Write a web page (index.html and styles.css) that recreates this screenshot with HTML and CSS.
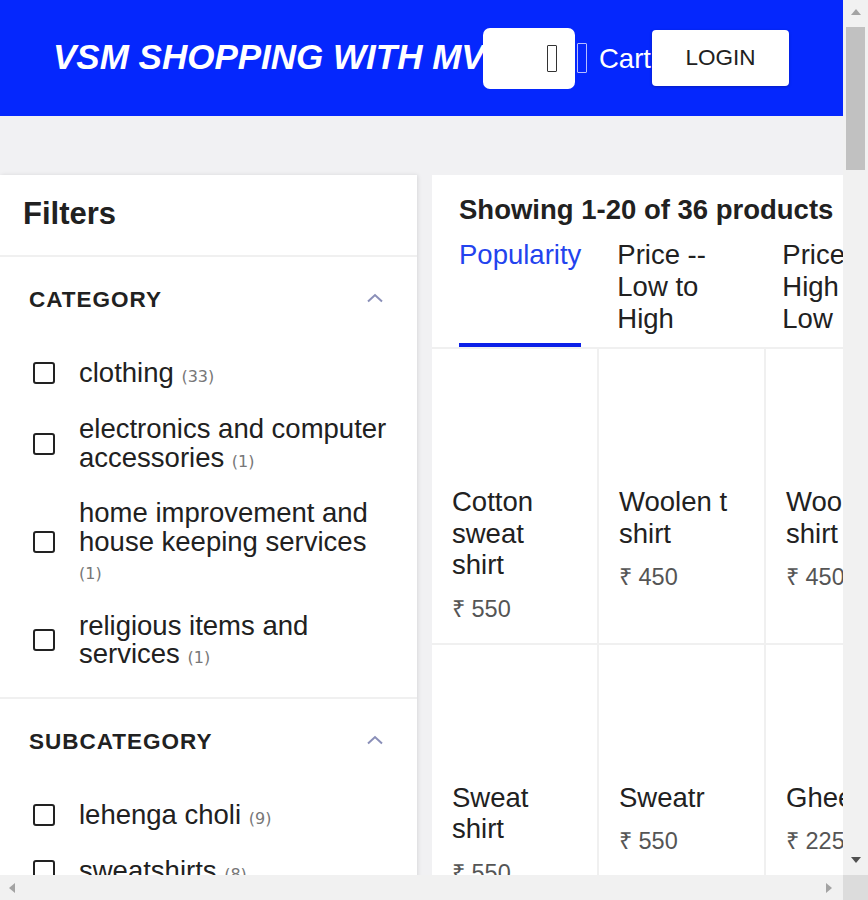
FILE: index.html
```html
<!DOCTYPE html>
<html lang="en">
<head>
<meta charset="utf-8">
<title>VSM Shopping</title>
<link rel="stylesheet" href="styles.css">
</head>
<body>
<div class="screen">
  <div class="viewport">
    <header class="topbar">
      <div class="brand">VSM SHOPPING WITH MVSM</div>
      <div class="search"><span class="glyph dark"></span></div>
      <div class="cart"><span class="glyph light"></span><span class="cart-text">Cart</span></div>
      <button class="login">LOGIN</button>
    </header>
    <main class="page">
      <aside class="filters">
        <div class="filters-title">Filters</div>
        <section class="fsection">
          <div class="fhead"><span class="fname">CATEGORY</span>
            <svg class="chev" width="18" height="10" viewBox="0 0 18 10"><polyline points="2,8.5 9,2 16,8.5" fill="none" stroke="#8a8fb8" stroke-width="2"/></svg>
          </div>
          <ul class="flist">
            <li class="fitem"><span class="box"></span><span class="flabel">clothing <span class="count">(33)</span></span></li>
            <li class="fitem"><span class="box"></span><span class="flabel">electronics and computer accessories <span class="count">(1)</span></span></li>
            <li class="fitem"><span class="box"></span><span class="flabel">home improvement and house keeping services <span class="count">(1)</span></span></li>
            <li class="fitem"><span class="box"></span><span class="flabel">religious items and services <span class="count">(1)</span></span></li>
          </ul>
        </section>
        <section class="fsection">
          <div class="fhead"><span class="fname">SUBCATEGORY</span>
            <svg class="chev" width="18" height="10" viewBox="0 0 18 10"><polyline points="2,8.5 9,2 16,8.5" fill="none" stroke="#8a8fb8" stroke-width="2"/></svg>
          </div>
          <ul class="flist">
            <li class="fitem"><span class="box"></span><span class="flabel">lehenga choli <span class="count">(9)</span></span></li>
            <li class="fitem"><span class="box"></span><span class="flabel">sweatshirts <span class="count">(8)</span></span></li>
            <li class="fitem"><span class="box"></span><span class="flabel">woolen t shirts <span class="count">(4)</span></span></li>
          </ul>
        </section>
      </aside>
      <section class="results">
        <div class="results-head">
          <div class="showing">Showing 1-20 of 36 products</div>
          <div class="tabs">
            <div class="tab active">Popularity</div>
            <div class="tab">Price -- Low to High</div>
            <div class="tab">Price -- High to Low</div>
          </div>
        </div>
        <div class="grid">
          <div class="card"><div class="thumbimg"></div><div class="pname">Cotton sweat shirt</div><div class="price">₹ 550</div></div>
          <div class="card"><div class="thumbimg"></div><div class="pname">Woolen t shirt</div><div class="price">₹ 450</div></div>
          <div class="card"><div class="thumbimg"></div><div class="pname">Woolen t shirt</div><div class="price">₹ 450</div></div>
          <div class="card"><div class="thumbimg"></div><div class="pname">Sweat shirt</div><div class="price">₹ 550</div></div>
          <div class="card"><div class="thumbimg"></div><div class="pname">Sweatr</div><div class="price">₹ 550</div></div>
          <div class="card"><div class="thumbimg"></div><div class="pname">Ghee diya</div><div class="price">₹ 225</div></div>
        </div>
      </section>
    </main>
  </div>
  <div class="vscroll">
    <span class="arr up"></span>
    <div class="vthumb"></div>
    <span class="arr down"></span>
  </div>
  <div class="hscroll">
    <span class="arr left"></span>
    <span class="arr right"></span>
  </div>
  <div class="corner"></div>
</div>
</body>
</html>
```
FILE: styles.css
```css
* { box-sizing: border-box; }
html, body { margin: 0; padding: 0; }
body {
  font-family: "Liberation Sans", Arial, sans-serif;
  color: #212121;
  background: #f1f1f3;
}
.screen {
  width: 868px;
  height: 900px;
  display: grid;
  grid-template-columns: 843px 25px;
  grid-template-rows: 875px 25px;
  overflow: hidden;
}
.viewport {
  overflow: hidden;
  background: #f1f1f3;
}

/* header */
.topbar {
  height: 116px;
  background: #0527fd;
  display: flex;
  align-items: center;
  padding-left: 53px;
  white-space: nowrap;
}
.brand {
  width: 430px;
  flex-shrink: 0;
  color: #fff;
  font-size: 35px;
  font-weight: bold;
  font-style: italic;
  overflow: visible;
  margin-top: -2px;
}
.search {
  position: relative;
  z-index: 1;
  width: 92px;
  height: 61px;
  background: #fff;
  border-radius: 7px;
  display: flex;
  align-items: center;
  justify-content: flex-end;
  padding-right: 18px;
  flex-shrink: 0;
}
.glyph {
  display: block;
  width: 10px;
  height: 27px;
  border-radius: 1px;
}
.glyph.dark { border: 1.5px solid #333; }
.glyph.light { border: 1.5px solid #b6bdff; height: 30px; }
.cart {
  display: flex;
  align-items: center;
  margin-left: 2px;
  gap: 12px;
  flex-shrink: 0;
}
.cart-text {
  color: #fff;
  font-size: 27.5px;
  margin-top: 1px;
}
.login {
  margin-left: 1px;
  width: 137px;
  height: 56px;
  background: #fff;
  border: none;
  border-radius: 4px;
  font-family: "Liberation Sans", Arial, sans-serif;
  font-size: 22.5px;
  color: #212121;
  box-shadow: 0 1px 3px rgba(0,0,0,0.25);
  flex-shrink: 0;
}

/* page */
.page {
  display: flex;
  align-items: flex-start;
  gap: 15px;
  padding-top: 59px;
  width: 1100px;
}
.filters {
  width: 417px;
  flex-shrink: 0;
  background: #fff;
  box-shadow: 1px 0 4px rgba(0,0,0,0.10);
}
.filters-title {
  font-size: 31px;
  font-weight: bold;
  padding: 21px 23px 24px;
  line-height: 35px;
}
.fsection {
  border-top: 2px solid #f0f0f0;
  padding: 30px 28px 15px 29px;
}
.fhead {
  display: flex;
  align-items: center;
  justify-content: space-between;
  line-height: 26px;
}
.fname {
  font-size: 22.5px;
  font-weight: bold;
  letter-spacing: 1px;
}
.chev { display: block; margin-top: -4px; margin-right: 5px; }
.flist {
  list-style: none;
  margin: 32px 0 0;
  padding: 0;
}
.fitem {
  display: flex;
  align-items: center;
  padding: 13.5px 0;
}
.fitem:first-child { padding-bottom: 14.5px; }
.box {
  width: 22px;
  height: 22px;
  border: 2px solid #222;
  border-radius: 3px;
  flex-shrink: 0;
  margin-left: 4px;
  margin-right: 24px;
}
.flabel {
  font-size: 27.5px;
  line-height: 28.5px;
  color: #212121;
}
.count {
  font-family: "DejaVu Sans", sans-serif;
  font-size: 16px;
  line-height: 1;
  color: #777;
}

/* results */
.results {
  width: 640px;
  flex-shrink: 0;
  background: #fff;
}
.results-head {
  padding: 19px 0 0 27px;
  border-bottom: 2px solid #f0f0f0;
}
.showing {
  font-size: 27.5px;
  font-weight: bold;
  line-height: 31px;
  white-space: nowrap;
}
.tabs {
  display: flex;
  gap: 36px;
  margin-top: 14px;
}
.tab {
  font-size: 27.5px;
  color: #212121;
  width: 129px;
  padding-bottom: 12px;
}
.tab.active {
  width: auto;
  color: #2343ee;
  border-bottom: 4px solid #0b1fe8;
  padding-bottom: 8px;
}
.grid {
  display: grid;
  grid-template-columns: repeat(3, 167px);
}
.card {
  border-right: 2px solid #f0f0f0;
  border-bottom: 2px solid #f0f0f0;
  padding: 20px 18px 20px 20px;
}
.thumbimg { height: 117px; }
.pname {
  font-size: 27.5px;
  line-height: 31.5px;
  color: #212121;
}
.price {
  margin-top: 15px;
  font-size: 23.5px;
  line-height: 27px;
  color: #555;
}

/* fake scrollbars */
.vscroll {
  background: #f1f1f1;
  display: flex;
  flex-direction: column;
  align-items: center;
  padding-top: 9px;
}
.vthumb {
  width: 19px;
  height: 143px;
  background: #c1c1c1;
  margin-top: 12px;
}
.vscroll .down { margin-top: auto; margin-bottom: 12px; }
.hscroll {
  background: #f1f1f1;
  display: flex;
  align-items: center;
  justify-content: space-between;
  padding: 0 11px 0 9px;
}
.corner { background: #dcdcdc; }
.arr { width: 0; height: 0; display: block; }
.arr.up { border-left: 5px solid transparent; border-right: 5px solid transparent; border-bottom: 6px solid #a3a3a3; }
.arr.down { border-left: 5px solid transparent; border-right: 5px solid transparent; border-top: 6px solid #505050; }
.arr.left { border-top: 5px solid transparent; border-bottom: 5px solid transparent; border-right: 6px solid #a3a3a3; }
.arr.right { border-top: 5px solid transparent; border-bottom: 5px solid transparent; border-left: 6px solid #a3a3a3; }
```
